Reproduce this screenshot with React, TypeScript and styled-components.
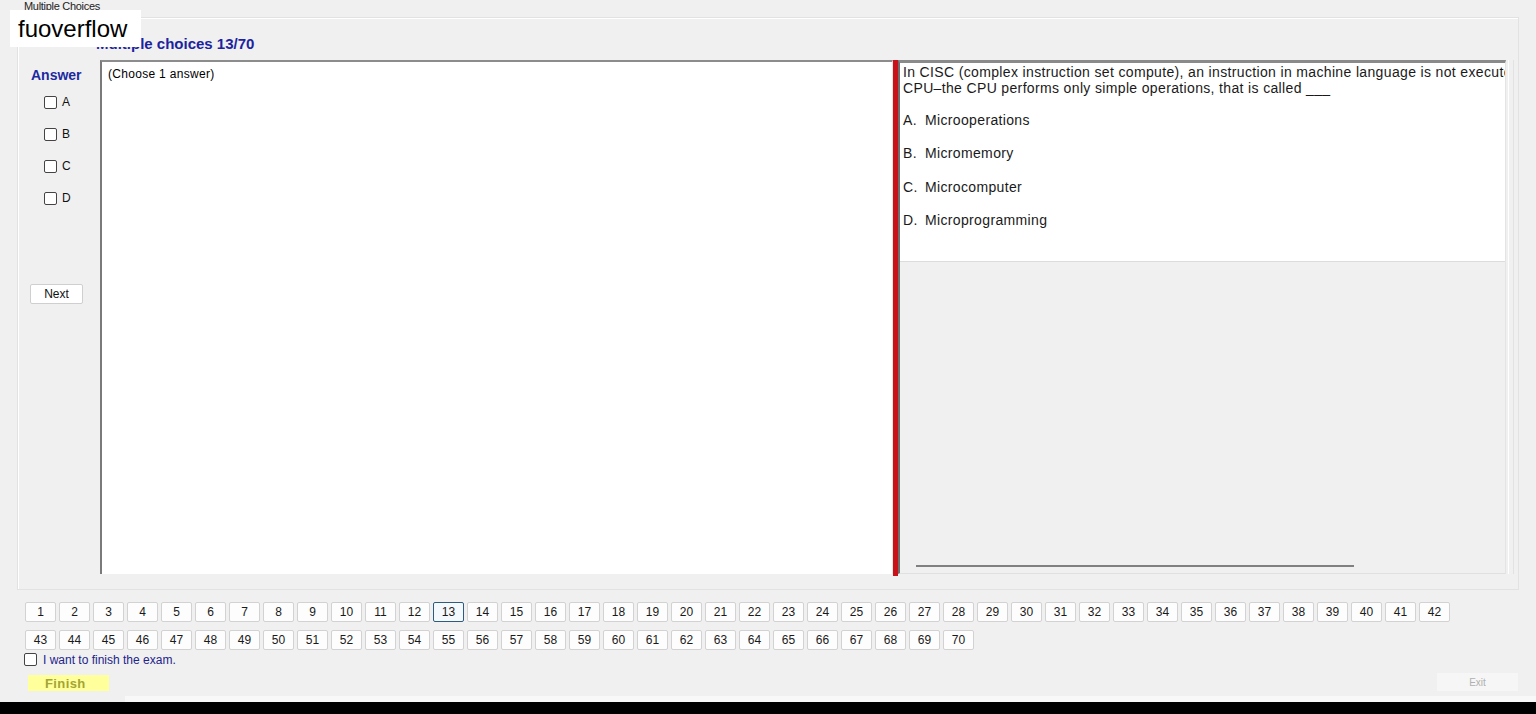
import styled, { createGlobalStyle } from 'styled-components';

const GlobalStyle = createGlobalStyle`
  html, body {
    margin: 0;
    padding: 0;
    background: #f0f0f0;
    font-family: "Liberation Sans", Arial, sans-serif;
    overflow: hidden;
  }
`;

const Window = styled.div`
  position: relative;
  width: 1536px;
  height: 714px;
  display: flex;
  flex-direction: column;
  background: #f0f0f0;
  color: #000;
`;

const TitleBar = styled.div`
  height: 17px;
  padding-left: 24px;
  font-size: 11px;
  line-height: 12px;
  color: #222;
  letter-spacing: -0.3px;
`;

const Watermark = styled.div`
  position: absolute;
  left: 10px;
  top: 10px;
  width: 131px;
  height: 37px;
  background: #fff;
  font-size: 24px;
  line-height: 37px;
  padding-left: 8px;
  box-sizing: border-box;
  color: #000;
`;

const GroupBox = styled.div`
  margin: 0 17px 0 17px;
  height: 573px;
  box-sizing: border-box;
  border: 1px solid #e2e2e2;
  box-shadow: inset 1px 1px 0 #fff;
  padding-top: 18px;
  display: flex;
  flex-direction: column;
`;

const Heading = styled.div`
  margin-left: 78px;
  font-size: 15px;
  line-height: 16px;
  font-weight: bold;
  color: #1c23a0;
  height: 16px;
`;

const Body = styled.div`
  margin-top: 8px;
  display: flex;
  height: 515px;
`;

const AnswerColumn = styled.div`
  width: 82px;
  display: flex;
  flex-direction: column;
`;

const AnswerLabel = styled.div`
  margin: 7px 0 3px 13px;
  font-size: 14px;
  line-height: 16px;
  font-weight: bold;
  color: #1c2aa0;
`;

const OptionRow = styled.label`
  height: 32px;
  display: flex;
  align-items: center;
  padding-left: 26px;
  font-size: 12px;
  color: #111;
  gap: 5px;
`;

const Box = styled.span<{ $size?: number }>`
  width: ${(p) => p.$size ?? 11}px;
  height: ${(p) => p.$size ?? 11}px;
  border: 1px solid #444;
  border-radius: 2px;
  background: #fff;
  display: inline-block;
  flex-shrink: 0;
`;

const NextButton = styled.button`
  margin: 70px 0 0 12px;
  width: 53px;
  height: 20px;
  padding: 0;
  background: #fff;
  border: 1px solid #cfcfcf;
  border-radius: 2px;
  font-family: inherit;
  font-size: 12px;
  color: #111;
`;

const MainBox = styled.div`
  width: 793px;
  height: 514px;
  box-sizing: border-box;
  background: #fff;
  border-top: 2px solid #8c8c8c;
  border-left: 2px solid #7a7a7a;
  border-right: 1px solid #e6e6e6;
  padding: 5px 6px;
  font-size: 12px;
  line-height: 15px;
  letter-spacing: 0.3px;
`;

const Splitter = styled.div`
  width: 5px;
  height: 516px;
  background: #c9111a;
`;

const RightPanel = styled.div`
  flex: 1;
  min-width: 0;
  display: flex;
  flex-direction: column;
  height: 514px;
  box-sizing: border-box;
  border-left: 2px solid #6e6e6e;
  border-top: 3px solid #8a8a8a;
  border-right: 1px solid #e4e4e4;
  border-bottom: 1px solid #e0e0e0;
  overflow: hidden;
`;

const QuestionArea = styled.div`
  height: 199px;
  background: #fff;
  border-bottom: 1px solid #dcdcdc;
  padding: 1px 0 0 3px;
  box-sizing: border-box;
  font-size: 14px;
  line-height: 16px;
  letter-spacing: 0.35px;
  color: #1a1a1a;
  overflow: hidden;
`;

const QuestionLine = styled.div`
  white-space: nowrap;
`;

const Choices = styled.div`
  margin-top: 8px;
`;

const Choice = styled.div`
  line-height: 33.4px;
  height: 33.4px;
  white-space: nowrap;
`;

const ChoiceKey = styled.span`
  display: inline-block;
  width: 22px;
`;

const ScrollArea = styled.div`
  flex: 1;
  display: flex;
  flex-direction: column;
  justify-content: flex-end;
  padding: 0 0 6px 16px;
`;

const ScrollLine = styled.div`
  width: 438px;
  height: 2px;
  background: #808080;
`;

const FrameEdge = styled.div`
  width: 6px;
  height: 514px;
  box-sizing: border-box;
  border-left: 1px solid #fff;
  border-right: 1px solid #e2e2e2;
  margin-right: 4px;
  margin-left: 2px;
`;

const NavGrid = styled.div`
  margin: 12px 0 0 25px;
  display: grid;
  grid-template-columns: repeat(42, 31px);
  column-gap: 3px;
  row-gap: 8px;
`;

const NavButton = styled.button<{ $current?: boolean }>`
  height: 20px;
  width: 31px;
  padding: 0;
  background: ${(p) => (p.$current ? '#f4f9fd' : '#fdfdfd')};
  border: 1px solid ${(p) => (p.$current ? '#2e5c7e' : '#d2d2d2')};
  border-radius: 2px;
  font-family: inherit;
  font-size: 12px;
  color: #1a1a1a;
`;

const FinishCheck = styled.label`
  margin: 2px 0 0 24px;
  height: 15px;
  display: flex;
  align-items: center;
  gap: 6px;
  font-size: 12px;
  color: #23238c;
`;

const ButtonRow = styled.div`
  margin-top: 6px;
  height: 18px;
  display: flex;
  justify-content: space-between;
  padding: 0 18px 0 28px;
`;

const FinishButton = styled.button`
  margin-top: 2px;
  width: 81px;
  height: 16px;
  padding: 0 0 0 2px;
  border: none;
  background: #ffff9c;
  font-family: inherit;
  font-size: 13px;
  font-weight: bold;
  letter-spacing: 0.4px;
  color: #a3a534;
  text-align: left;
  text-indent: 15px;
`;

const ExitButton = styled.button`
  width: 81px;
  height: 18px;
  padding: 0;
  border: none;
  background: #f6f6f6;
  font-family: inherit;
  font-size: 10px;
  color: #b0b0b0;
`;

const BottomStrip = styled.div`
  margin-top: 5px;
  height: 6px;
  margin-left: 125px;
  background: #f8f8f8;
`;

const BlackBar = styled.div`
  height: 12px;
  background: #000;
`;

const numbers = Array.from({ length: 70 }, (_, i) => i + 1);

export default function App() {
  return (
    <Window>
      <GlobalStyle />
      <TitleBar>Multiple Choices</TitleBar>
      <GroupBox>
        <Heading>Multiple choices 13/70</Heading>
        <Body>
          <AnswerColumn>
            <AnswerLabel>Answer</AnswerLabel>
            {['A', 'B', 'C', 'D'].map((k) => (
              <OptionRow key={k}>
                <Box />
                {k}
              </OptionRow>
            ))}
            <NextButton>Next</NextButton>
          </AnswerColumn>
          <MainBox>(Choose 1 answer)</MainBox>
          <Splitter />
          <RightPanel>
            <QuestionArea>
              <QuestionLine>
                In CISC (complex instruction set compute), an instruction in machine language is not executed directly by the
              </QuestionLine>
              <QuestionLine>CPU–the CPU performs only simple operations, that is called ___</QuestionLine>
              <Choices>
                <Choice><ChoiceKey>A.</ChoiceKey>Microoperations</Choice>
                <Choice><ChoiceKey>B.</ChoiceKey>Micromemory</Choice>
                <Choice><ChoiceKey>C.</ChoiceKey>Microcomputer</Choice>
                <Choice><ChoiceKey>D.</ChoiceKey>Microprogramming</Choice>
              </Choices>
            </QuestionArea>
            <ScrollArea>
              <ScrollLine />
            </ScrollArea>
          </RightPanel>
          <FrameEdge />
        </Body>
      </GroupBox>
      <NavGrid>
        {numbers.map((n) => (
          <NavButton key={n} $current={n === 13}>
            {n}
          </NavButton>
        ))}
      </NavGrid>
      <FinishCheck>
        <Box $size={11} />
        I want to finish the exam.
      </FinishCheck>
      <ButtonRow>
        <FinishButton>Finish</FinishButton>
        <ExitButton>Exit</ExitButton>
      </ButtonRow>
      <BottomStrip />
      <BlackBar />
      <Watermark>fuoverflow</Watermark>
    </Window>
  );
}
